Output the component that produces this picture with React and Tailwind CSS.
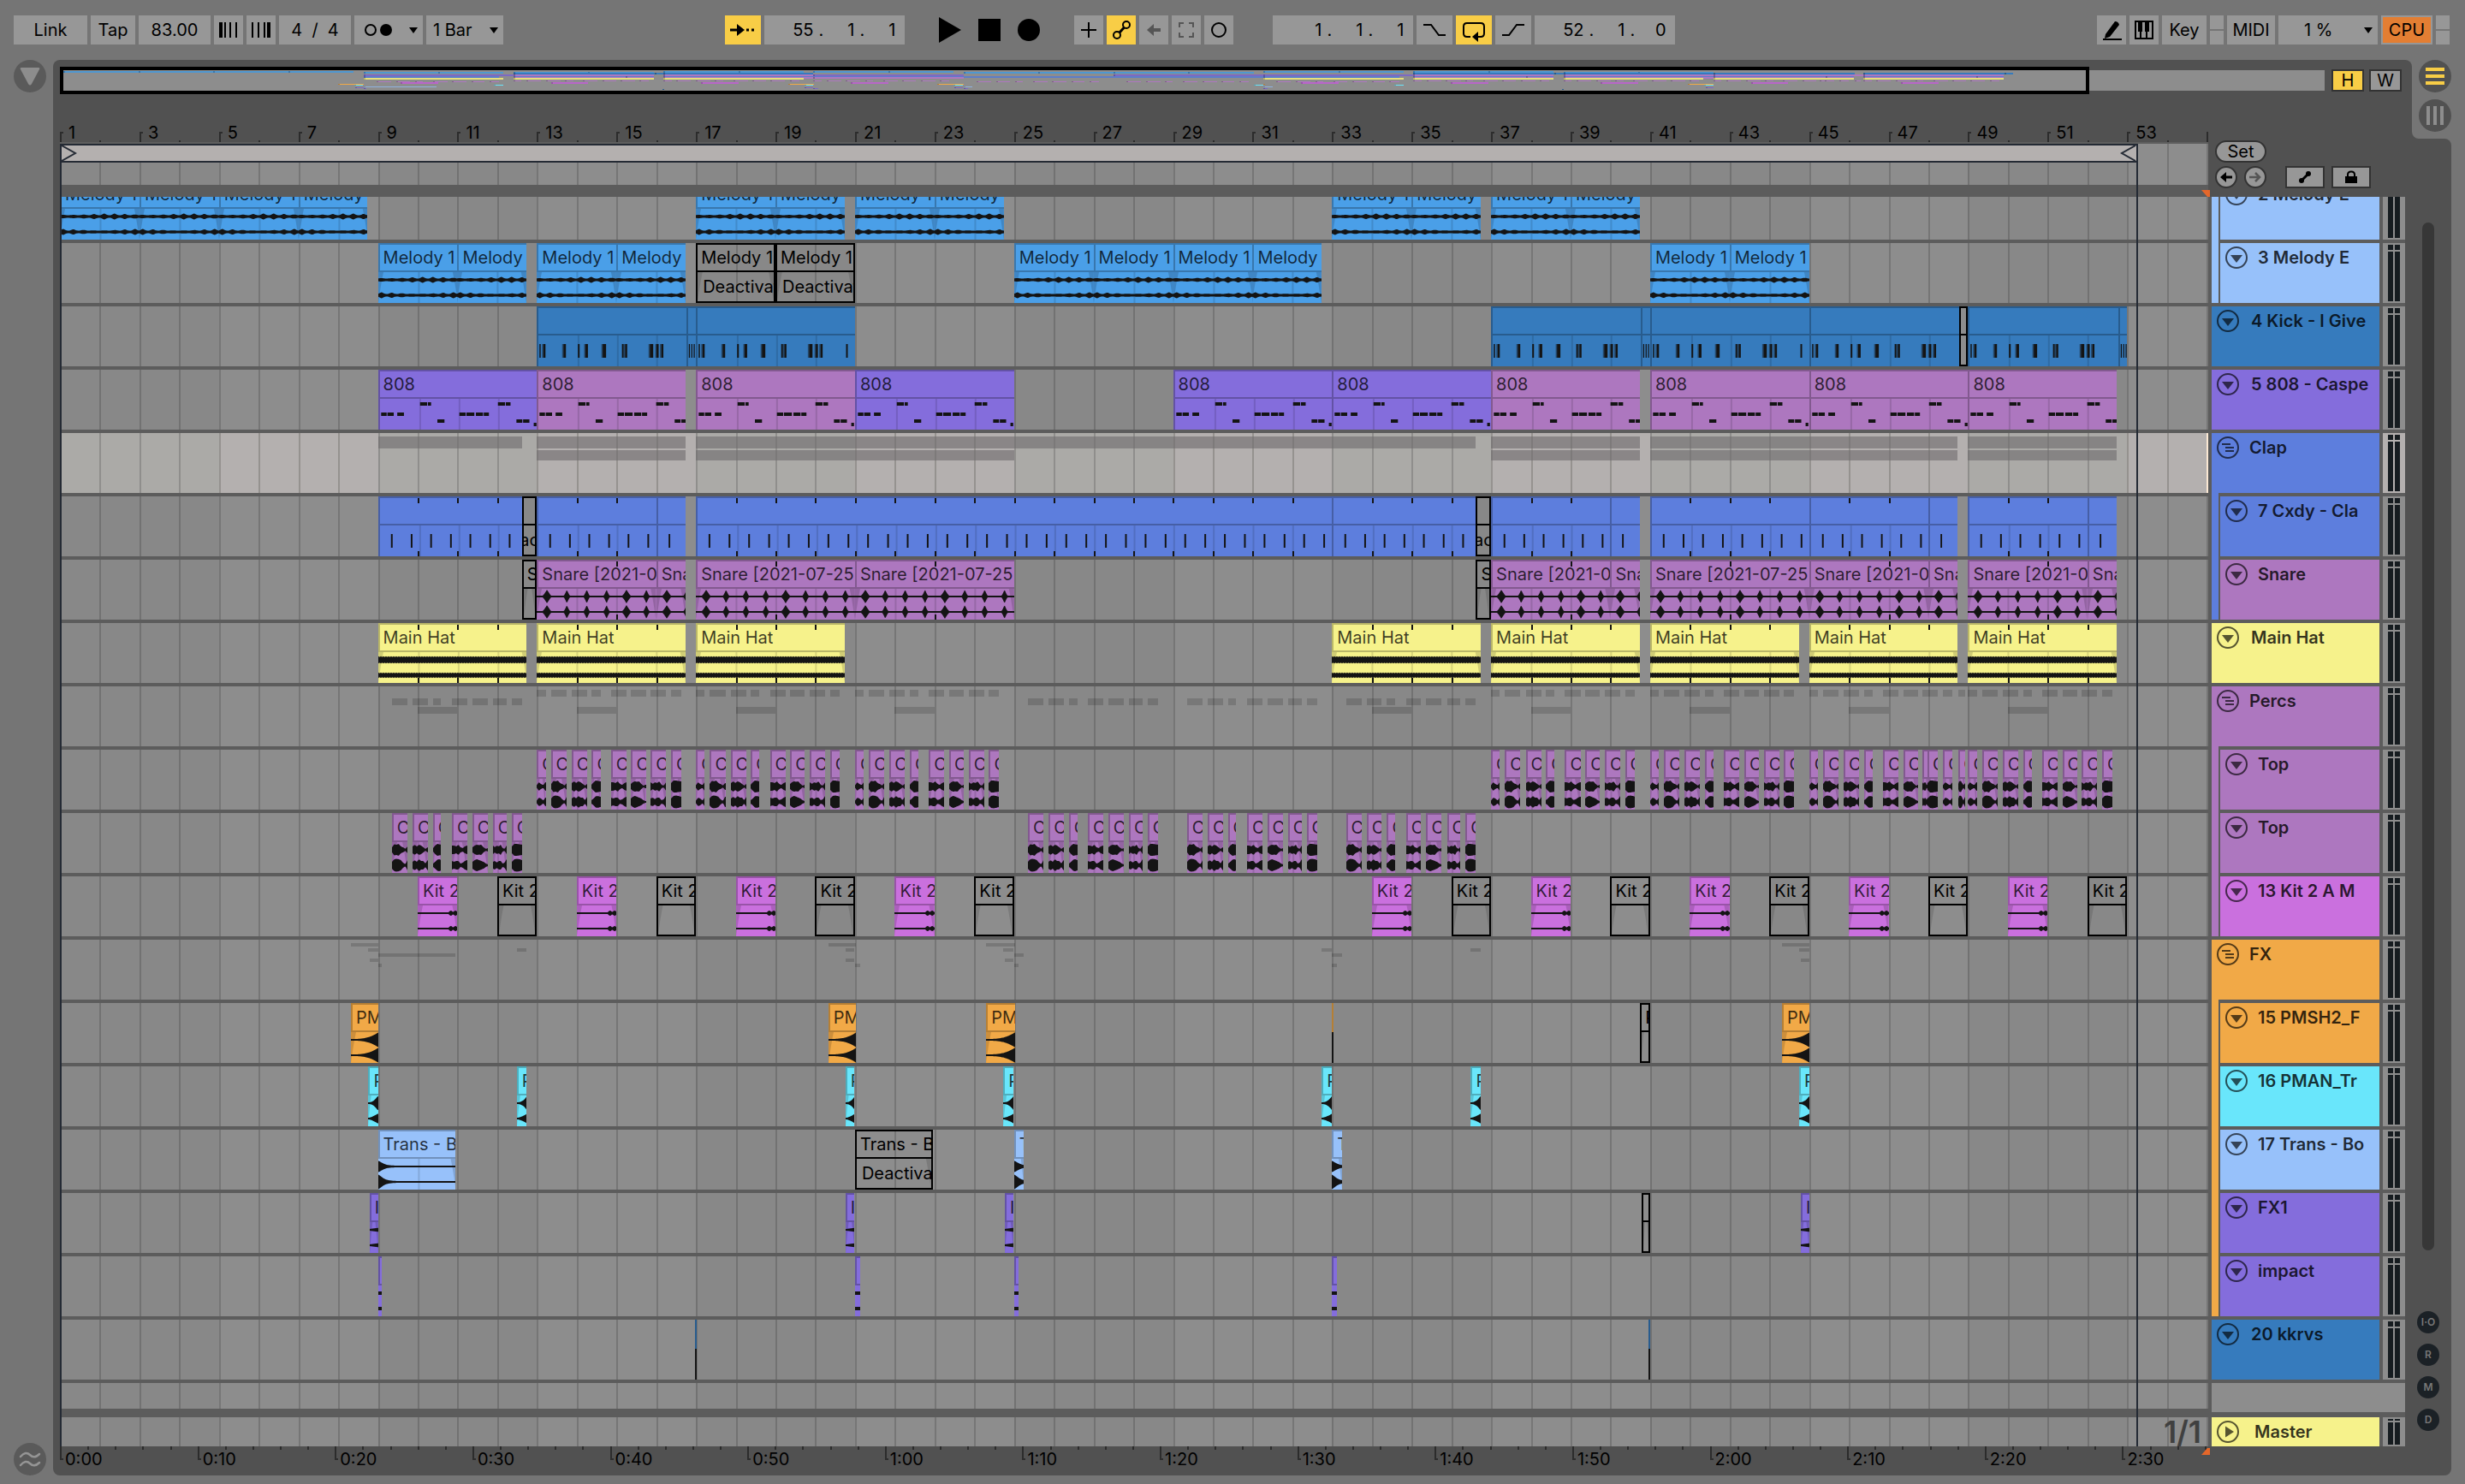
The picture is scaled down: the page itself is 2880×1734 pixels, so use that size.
import React from "react";

const BARS = 54.04;
const BAR_PX = 46.45;
const pct = (bars) => `${(bars / BARS) * 100}%`;

const COLORS = {
  sky: { bg: "bg-[#4a9fe8]", edge: "border-[#3877ae]", dark: "#3877ae", hex: "#4f97d0" },
  kick: { bg: "bg-[#367bbd]", edge: "border-[#285c8e]", dark: "#285c8e", hex: "#367bbd" },
  purple: { bg: "bg-[#846ddc]", edge: "border-[#6352a5]", dark: "#6352a5", hex: "#7c69c4" },
  pink: { bg: "bg-[#ad77bf]", edge: "border-[#82598f]", dark: "#82598f", hex: "#ad77bf" },
  blue: { bg: "bg-[#5d7edd]", edge: "border-[#465fa6]", dark: "#465fa6", hex: "#5d7ec8" },
  yellow: { bg: "bg-[#f6f28b]", edge: "border-[#b9b668]", dark: "#b9b668", hex: "#e6df7c" },
  magenta: { bg: "bg-[#ca70de]", edge: "border-[#9854a7]", dark: "#9854a7", hex: "#b866c9" },
  orange: { bg: "bg-[#f1a947]", edge: "border-[#b57f35]", dark: "#b57f35", hex: "#f1a947" },
  cyan: { bg: "bg-[#69e6fb]", edge: "border-[#4fadbc]", dark: "#4fadbc", hex: "#69e6fb" },
  light: { bg: "bg-[#97c1fa]", edge: "border-[#7191bc]", dark: "#7191bc", hex: "#8fb2df" },
};

const c = (s, e, extra = {}) => ({ s, e, ...extra });
const each = (list, extra) => list.map(([s, e]) => c(s, e, extra));
const off = true;

const MELODY_A = each(
  [[1, 3], [3, 5], [5, 7], [7, 8.74], [17, 19], [19, 20.74], [21, 23], [23, 24.74], [33, 35], [35, 36.74], [37, 39], [39, 40.74]],
  { label: "Melody 1" }
);
const MELODY_B = [
  ...each([[9, 11], [11, 12.74], [13, 15], [15, 16.74]], { label: "Melody 1" }),
  ...each([[17, 19], [19, 21]], { label: "Melody 1", off, note: "Deactivated" }),
  ...each([[25, 27], [27, 29], [29, 31], [31, 32.74], [41, 43], [43, 45]], { label: "Melody 1" }),
];
const KICK = [
  ...each([[13, 16.77], [17, 21], [37, 40.77], [41, 45], [45, 48.77], [49, 52.77]], {}),
  ...each([[16.77, 17], [40.77, 41], [52.77, 53]], { roll: true }),
  c(48.77, 49, { off }),
];
const BASS = [
  ...each([[9, 13], [21, 25], [29, 33], [33, 37]], { label: "808", color: "purple" }),
  ...each([[13, 16.74], [17, 21], [37, 40.74], [41, 45], [45, 49], [49, 52.74]], { label: "808", color: "pink" }),
];
const CLAP = [
  ...each([[9, 12.62], [13, 16], [16, 16.74], [17, 33], [33, 36.62], [37, 40], [40, 40.74], [41, 45], [45, 48], [48, 48.74], [49, 52], [52, 52.74]], { ticks: 1 }),
  ...each([[12.62, 13], [36.62, 37]], { off, note: "ac", center: true }),
];
const SNARE = [
  ...each([[13, 16], [16, 16.74], [17, 21], [21, 25], [37, 40], [40, 40.74], [41, 45], [45, 48], [48, 48.74], [49, 52], [52, 52.74]], { label: "Snare [2021-07-25", ticks: 2 }),
  ...each([[12.62, 13], [36.62, 37]], { off, label: "S" }),
];
const HAT = each(
  [[9, 12.74], [13, 16.74], [17, 20.74], [33, 36.74], [37, 40.74], [41, 44.74], [45, 48.74], [49, 52.74]],
  { label: "Main Hat", ticks: 1 }
);
const PAT_A = [[0, 0.22], [0.35, 0.74], [0.87, 1.26], [1.38, 1.6], [1.86, 2.25], [2.37, 2.74], [2.86, 3.25], [3.37, 3.62]];
const PAT_A2 = [[0, 0.22], [0.35, 0.74], [0.87, 1.26], [1.38, 1.6], [1.86, 2.25], [2.37, 2.74], [2.84, 2.98], [2.98, 3.23], [3.37, 3.61], [3.76, 3.92]];
const PAT_B = [[0.35, 0.74], [0.87, 1.25], [1.38, 1.59], [1.86, 2.24], [2.37, 2.76], [2.89, 3.23], [3.36, 3.62]];
const TOP_A = [13, 17, 21, 37, 41, 45, 49].flatMap((b) =>
  (b === 45 ? PAT_A2 : PAT_A).map(([s, e], i) => c(b + s, b + e, { label: "C", seed: i }))
);
const TOP_B = [9, 25, 29, 33].flatMap((b) => PAT_B.map(([s, e], i) => c(b + s, b + e, { label: "C", seed: i + 1 })));
const KIT = [
  ...[10, 14, 18, 22, 34, 38, 42, 46, 50].map((b) => c(b, b + 1, { label: "Kit 2" })),
  ...[12, 16, 20, 24, 36, 40, 44, 48, 52].map((b) => c(b, b + 1, { label: "Kit 2", off })),
];
const PM = [
  ...each([[8.32, 9], [20.33, 21.02], [24.3, 25.02], [44.32, 45]], { label: "PMSH2" }),
  c(33, 33.04, { sliver: true }),
  c(40.75, 41, { off, label: "P" }),
];
const PMAN = each([[8.76, 9], [12.49, 12.74], [20.76, 20.99], [24.73, 24.99], [32.74, 33], [36.49, 36.74], [44.75, 45]], { label: "P" });
const TRANS = [
  c(9, 10.95, { label: "Trans - Boom" }),
  c(21, 22.95, { label: "Trans - Boom", off, note: "Deactivated" }),
  ...each([[25, 25.25], [33, 33.26]], { label: "T" }),
];
const FX1 = [...each([[8.79, 9], [20.76, 20.99], [24.77, 24.99], [44.79, 45]], { label: "I" }), c(40.78, 41, { off })];
const IMPACT = each([[9, 9.09], [21, 21.12], [25, 25.12], [33, 33.12]], {});
const KKRVS = each([[16.97, 17.01], [40.97, 41.01]], { sliver: true });

const CLAP_SUM = [
  { y: "top-1 h-3.5", list: [[9, 12.62], [13, 16.74], [17, 36.62], [37, 40.74], [41, 48.74], [49, 52.74]] },
  { y: "top-5 h-3", list: [[13, 16.74], [17, 25], [37, 40.74], [41, 48.74], [49, 52.74]] },
];
const ranges = (list) => list.filter((k) => !k.off && !k.sliver).map((k) => [k.s, k.e]);
const PERC_SUM = [
  { y: "top-1 h-2", list: ranges(TOP_A) },
  { y: "top-3.5 h-2", list: ranges(TOP_B) },
  { y: "top-6 h-2", list: ranges(KIT) },
];
const FX_SUM = [
  { y: "top-1 h-1", list: ranges(PM) },
  { y: "top-2.5 h-1", list: ranges(PMAN) },
  { y: "top-4 h-1", list: ranges(TRANS) },
  { y: "top-5.5 h-1", list: ranges(FX1) },
  { y: "top-7 h-1", list: ranges(IMPACT) },
];

const LANES = [
  { id: "m2", kind: "melody", color: "sky", clips: MELODY_A, first: true },
  { id: "m3", kind: "melody", color: "sky", clips: MELODY_B },
  { id: "kick", kind: "kick", color: "kick", clips: KICK },
  { id: "808", kind: "bass", color: "purple", clips: BASS },
  { id: "clap", summary: CLAP_SUM, selected: true },
  { id: "cxdy", kind: "clap", color: "blue", clips: CLAP },
  { id: "snare", kind: "snare", color: "pink", clips: SNARE },
  { id: "hat", kind: "hat", color: "yellow", clips: HAT },
  { id: "percs", summary: PERC_SUM },
  { id: "topA", kind: "top", color: "pink", clips: TOP_A },
  { id: "topB", kind: "top", color: "pink", clips: TOP_B },
  { id: "kit", kind: "kit", color: "magenta", clips: KIT },
  { id: "fx", summary: FX_SUM },
  { id: "pm", kind: "rise", color: "orange", clips: PM },
  { id: "pman", kind: "swell", color: "cyan", clips: PMAN },
  { id: "trans", kind: "decay", color: "light", clips: TRANS },
  { id: "fx1", kind: "thin", color: "purple", clips: FX1 },
  { id: "impact", kind: "dot", color: "purple", clips: IMPACT },
  { id: "kkrvs", kind: "none", color: "kick", clips: KKRVS },
];

function band(w, cy, amp, step = 1) {
  let up = "";
  let down = "";
  for (let x = 0; x <= w + step; x += step) {
    const a = amp(Math.min(x, w));
    up += `${x ? "L" : "M"}${x.toFixed(1)} ${(cy - a).toFixed(2)}`;
    down = `L${x.toFixed(1)} ${(cy + a).toFixed(2)}` + down;
  }
  return up + down + "Z";
}

const TOP_SHAPES = [
  [[1.5, 5, 3, 1.5, 5], [1.5, 5, 4, 1.5, 5]],
  [[3, 6.5, 6, 7, 4, 3, 1, 4], [4, 7, 7.5, 7, 6, 3, 1, 6]],
  [[4, 6, 4, 6, 5, 3, 1, 3], [4, 6, 4, 7, 5, 5, 2, 6]],
  [[2, 5, 7, 6.5, 6], [2, 4, 6.5, 7, 6]],
  [[5, 5, 4, 6, 3, 2, 4, 5], [5, 4, 5, 5, 2, 3, 5, 6]],
  [[3, 5, 6, 5.5, 6, 3, 1, 2], [4, 6, 7, 6, 5, 4, 2, 1]],
  [[5, 3, 5, 4, 6, 2, 1, 5], [4, 5, 3, 5, 5, 2, 3, 7]],
  [[4, 7, 7, 6.5, 6], [4, 7, 7.5, 7, 6]],
];

function amps(kind, w, seed) {
  switch (kind) {
    case "melody": {
      const blob = (x) => Math.pow(Math.abs(Math.sin((x * Math.PI) / 12 + 0.6)), 4);
      return [
        (x) => 1.6 + blob(x) * (1.1 + 0.8 * Math.sin(x / 15 + 4)),
        (x) => 1.6 + blob(x) * (1 + 0.9 * Math.cos(x / 15)),
      ];
    }
    case "snare": {
      const f = (x) => {
        const beat = Math.floor(x / BAR_PX / 0.5);
        const reach = beat % 4 === 0 ? 5 : 3.5;
        const d = Math.abs((((x / BAR_PX) % 0.5) - 0.26) * BAR_PX);
        return d < reach ? 1 + 7 * Math.pow(1 - d / reach, 1.2) : 1;
      };
      return [f, f];
    }
    case "hat":
      return [(x) => 3.4 + (Math.floor(x) % 3 === 0 ? 0.8 : 0), (x) => 2.5 + (Math.floor(x) % 3 === 0 ? 0.8 : 0)];
    case "top": {
      const shape = TOP_SHAPES[seed % 8];
      return shape.map((pts) => (x) => {
        const t = (x / w) * (pts.length - 1);
        const i = Math.min(Math.floor(t), pts.length - 2);
        return pts[i] + (pts[i + 1] - pts[i]) * (t - i);
      });
    }
    case "kit": {
      const f = (x) => (x / w < 0.78 ? 1 : 1 + 2 * Math.abs(Math.sin((x / w - 0.78) * 28)));
      return [f, f];
    }
    case "rise": {
      const f = (x) => 1 + 7.5 * Math.pow(x / w, 3);
      return [f, f];
    }
    case "swell":
      return [(x) => 1 + 7 * Math.pow(x / w, 2.4), (x) => 1 + 4.5 * Math.pow(x / w, 1.6)];
    case "decay":
      return [(x) => 1 + 5.5 * Math.exp(-Math.pow(x / 7, 1.4)), (x) => 1 + 7.5 * Math.exp(-Math.pow(x / 7, 1.3))];
    case "thin":
      return [(x) => 1 + 1.3 * (x / w), (x) => 1 + 1.3 * (x / w)];
    case "dot":
      return [() => 2, () => 2];
    default:
      return null;
  }
}

const KICK_NOTES = [[0.07, 1.5], [0.17, 2.5], [0.68, 3], [1.05, 2], [1.24, 3], [1.68, 4], [2.17, 2], [2.25, 2.5], [2.88, 4], [3.05, 2.5], [3.17, 2.5], [3.82, 2]];
const BASS_NOTES = [
  [0.05, 0.19, 16], [0.21, 0.37, 16], [0.46, 0.63, 16], [1.04, 1.22, 4], [1.24, 1.32, 4], [1.48, 1.66, 24], [2.04, 2.2, 16], [2.22, 2.42, 16],
  [2.46, 2.64, 16], [2.66, 2.79, 16], [3.02, 3.2, 4], [3.22, 3.34, 4], [3.49, 3.64, 24], [3.66, 3.82, 24], [3.93, 4, 28],
];

function ClipBody({ kind, clip, shade }) {
  const len = clip.e - clip.s;
  const w = len * BAR_PX;
  const h = 36;
  const inner = [];
  for (let b = Math.floor(clip.s) + 1; b < clip.e - 0.01; b++) inner.push((b - clip.s) * BAR_PX);
  const fades = ["melody", "snare", "hat", "kit", "top", "rise", "swell", "decay", "thin"].includes(kind);
  const f = Math.min(6, w / 3);
  const a = clip.off ? null : amps(kind, w, clip.seed || 0);
  return (
    <svg className="block h-full w-full" viewBox={`0 0 ${w} ${h}`} preserveAspectRatio="none" aria-hidden="true">
      {!clip.off && inner.map((x) => <rect key={x} x={x} y="0" width="2" height={h} fill={shade} opacity="0.5" />)}
      {fades && (
        <g fill={clip.off ? "#000000" : shade} opacity={clip.off ? 0.12 : 0.6}>
          {kind !== "decay" && <path d={`M0 0H${f}Q${f / 2} 14 0 ${h}Z`} />}
          {kind !== "rise" && kind !== "swell" && <path d={`M${w} 0H${w - f}Q${w - f / 2} 14 ${w} ${h}Z`} />}
        </g>
      )}
      {a && (
        <g fill="#141414">
          <path d={band(w, 9, a[0])} />
          <path d={band(w, 27, a[1])} />
        </g>
      )}
      {kind === "kick" && !clip.off && (
        <g fill="#141414">
          {clip.roll
            ? [1, 4.5, 8].map((x) => <rect key={x} x={x} y="10" width="1.5" height="16" />)
            : KICK_NOTES.filter(([p]) => p < len).map(([p, nw]) => (
                <React.Fragment key={p}>
                  {nw > 2 && <rect x={p * BAR_PX - 3.5} y="10" width="1.5" height="16" opacity="0.5" />}
                  <rect x={p * BAR_PX - 2} y="10" width={nw} height="16" />
                </React.Fragment>
              ))}
        </g>
      )}
      {kind === "bass" &&
        BASS_NOTES.filter(([p]) => p < len).map(([p, q, y]) => (
          <rect key={p} x={p * BAR_PX - 1} y={y} width={(q - p) * BAR_PX} height="4" fill="#141414" />
        ))}
      {kind === "clap" &&
        !clip.off &&
        Array.from({ length: Math.ceil(len) * 2 }, (_, i) => 0.3 + i * 0.505 - Math.floor(i / 2) * 0.01)
          .filter((p) => p < len - 0.04)
          .map((p) => <rect key={p} x={p * BAR_PX - 1} y="10" width="2" height="16" fill="#141414" />)}
    </svg>
  );
}

function Clip({ clip, kind, color }) {
  const tone = COLORS[clip.color || color];
  const box = { left: pct(clip.s - 1), width: pct(clip.e - clip.s) };
  if (clip.sliver) {
    return (
      <div className="absolute inset-y-0 flex flex-col" style={box}>
        <div className="h-[34px]" style={{ background: tone.dark }} />
        <div className="grow bg-[#141414]" />
      </div>
    );
  }
  if (clip.off) {
    return (
      <div className="absolute inset-y-0 flex flex-col overflow-hidden border-2 border-black text-black" style={box}>
        <div className="h-8 shrink-0 border-b-2 border-black pl-1 text-xl leading-[30px] whitespace-nowrap">{clip.label}</div>
        <div className="relative min-h-0 grow overflow-hidden">
          <ClipBody kind={kind} clip={clip} shade={tone.dark} />
          {clip.note && (
            <div className={`absolute inset-0 flex text-xl leading-[34px] whitespace-nowrap ${clip.center ? "justify-center" : "pl-1.5"}`}>
              {clip.note}
            </div>
          )}
        </div>
      </div>
    );
  }
  const ticks = [];
  if (clip.ticks) {
    for (let b = clip.s + clip.ticks; b < clip.e - 0.01; b += clip.ticks) ticks.push((b - clip.s) / (clip.e - clip.s));
  }
  return (
    <div className={`absolute inset-y-0 flex flex-col overflow-hidden ${tone.bg}`} style={box}>
      <div className={`h-[34px] shrink-0 border-y-2 border-l-2 pl-1 text-xl leading-[30px] whitespace-nowrap text-black/75 ${tone.edge}`}>
        {clip.label}
      </div>
      <div className={`min-h-0 grow ${kind === "bass" || kind === "kick" || kind === "clap" ? `border-l-2 ${tone.edge}` : ""}`}>
        <ClipBody kind={kind} clip={clip} shade={tone.dark} />
      </div>
      {ticks.map((t) => (
        <React.Fragment key={t}>
          <div className="absolute top-0.5 h-1.5 w-0.5 bg-[#141414]" style={{ left: `${t * 100}%` }} />
          <div className="absolute bottom-0 h-1.5 w-0.5 bg-[#141414]" style={{ left: `${t * 100}%` }} />
        </React.Fragment>
      ))}
    </div>
  );
}

function Grid({ selected }) {
  return (
    <div className="absolute inset-0 overflow-hidden" aria-hidden="true">
      {Array.from({ length: 55 }, (_, i) => {
        const odd = Math.floor(i / 4) % 2 === 1;
        const tone = selected
          ? odd ? "bg-[#b4b0af] border-[#95928f]" : "bg-[#abaaa7] border-[#8f8e8c]"
          : odd ? "bg-[#8d8d8d] border-[#767676]" : "bg-[#888888] border-[#727272]";
        return <div key={i} className={`absolute inset-y-0 border-l-2 ${tone}`} style={{ left: pct(i), width: pct(1.02) }} />;
      })}
    </div>
  );
}

function Lane({ lane }) {
  return (
    <div className={`relative flex shrink-0 items-end overflow-hidden ${lane.first ? "h-[50px]" : "h-[70px]"}`}>
      {lane.selected && <Grid selected />}
      <div className="relative h-[70px] w-full shrink-0">
        {lane.clips && lane.clips.map((k, i) => <Clip key={i} clip={k} kind={lane.kind} color={lane.color} />)}
        {lane.summary &&
          lane.summary.flatMap((r, i) =>
            r.list.map(([s, e]) => (
              <div
                key={`${i}-${s}`}
                className={`absolute ${r.y} ${lane.selected ? "bg-[#6e6b6c]/60" : "bg-black/15"}`}
                style={{ left: pct(s - 1), width: pct(e - s) }}
              />
            ))
          )}
        {lane.selected && <div className="absolute inset-y-0 right-0 w-0.5 bg-[#fbe7d3]" />}
      </div>
    </div>
  );
}

const Sep = ({ h = "h-1" }) => <div className={`relative shrink-0 bg-[#5c5c5c] ${h}`} />;

function Overview() {
  const total = 60.3;
  const p = (b) => `${(b / total) * 100}%`;
  return (
    <div className="relative h-8 min-w-0 grow" role="img" aria-label="Arrangement overview">
      <div className="absolute inset-x-0 inset-y-1 overflow-hidden bg-[#8d8d8d]" />
      <div className="absolute inset-y-0 left-0 border-4 border-black" style={{ width: "89.6%" }} />
      <div className="absolute inset-y-1 right-0 left-1">
        {LANES.map((lane, row) =>
          (lane.clips || [])
            .filter((k) => !k.off)
            .map((k, i) => (
              <div
                key={`${row}-${i}`}
                className={`absolute ${["topA", "topB", "kkrvs"].includes(lane.id) || row > 12 ? "h-px" : "h-0.5"}`}
                style={{
                  left: p(k.s - 1),
                  width: p(k.e - k.s),
                  top: 1 + Math.round(row * 1.17),
                  background: COLORS[k.color || lane.color].hex,
                }}
              >
                <div className="h-full w-0.5" style={{ background: COLORS[k.color || lane.color].dark }} />
              </div>
            ))
        )}
      </div>
    </div>
  );
}

function Ruler() {
  return (
    <div className="relative h-14 shrink-0 overflow-hidden">
      {Array.from({ length: 55 }, (_, i) =>
        i % 2 === 0 ? (
          <div key={i} className="absolute bottom-0 flex items-end" style={{ left: pct(i) }}>
            <div className="flex h-3">
              <div className="w-0.5 bg-[#2c2c2c]" />
              <div className="h-0.5 w-0.5 bg-[#2c2c2c]" />
            </div>
            {i < 54 && <span className="pl-1.5 text-xl leading-[22px] text-black">{i + 1}</span>}
          </div>
        ) : (
          <div key={i} className="absolute bottom-0 h-0.5 w-0.5 bg-[#2c2c2c]" style={{ left: pct(i) }} />
        )
      )}
    </div>
  );
}

const SEC = 83 / 240;
function TimeRuler() {
  return (
    <div className="relative h-[34px] shrink-0">
      {Array.from({ length: 79 }, (_, i) => {
        const s = i * 2;
        const left = pct(s * SEC);
        if (s % 10) return <div key={i} className="absolute top-0 h-1 w-0.5 bg-[#2c2c2c]" style={{ left }} />;
        return (
          <div key={i} className="absolute top-0 flex" style={{ left }}>
            <div className="h-4 w-1 border-b-2 border-l-2 border-[#2c2c2c]" />
            <span className="pt-px pl-0.5 text-xl leading-7 text-black">{`${Math.floor(s / 60)}:${String(s % 60).padStart(2, "0")}`}</span>
          </div>
        );
      })}
      <svg className="absolute top-0.5 right-[-2px] h-2 w-2.5" viewBox="0 0 10 8">
        <path d="M0 8 7 0h3v8Z" fill="#e4672a" />
      </svg>
    </div>
  );
}

function FoldIcon({ type }) {
  return (
    <svg className="block size-[26px]" viewBox="0 0 26 26" fill="none" stroke="#000" strokeOpacity="0.65" strokeWidth="2">
      <circle cx="13" cy="13" r="12" />
      {type === "group" && <path d="M6 9h10M10 13h10M10 17h10" />}
      {type === "play" && <path d="m10 6.5 10 6.5-10 6.5Z" fill="#000" fillOpacity="0.65" stroke="none" />}
      {!type && <path d="M6 10h14l-7 9Z" fill="#000" fillOpacity="0.65" stroke="none" />}
    </svg>
  );
}

function TrackHeader({ name, tone, type, child, first }) {
  return (
    <div className={`flex shrink-0 items-end overflow-hidden ${tone} ${first ? "h-[50px]" : "h-[70px]"}`}>
      <div className="flex h-[70px] w-full shrink-0 items-start gap-3 overflow-hidden px-1.5 pt-1">
        <button type="button" aria-label={`Fold ${name}`}>
          <FoldIcon type={type} />
        </button>
        <span className={`text-xl leading-[26px] font-semibold whitespace-nowrap text-black/80 ${child || type ? "" : "pl-0.5"}`}>{name}</span>
      </div>
    </div>
  );
}

function Group({ name, tone, children }) {
  return (
    <div className="flex shrink-0 flex-col">
      {name && <TrackHeader name={name} tone={tone} type="group" />}
      <div className="flex gap-0.5">
        <div className={`w-2 shrink-0 ${tone}`} />
        <div className={`flex min-w-0 grow flex-col gap-1 ${name ? "border-t-4 border-[#5c5c5c]" : ""}`}>{children}</div>
      </div>
    </div>
  );
}

function Meter({ size = "h-[70px]", selected, open }) {
  return (
    <div className={`flex shrink-0 justify-center gap-0.5 pb-0.5 ${size} ${selected ? "bg-[#b4b0af]" : "bg-[#8d8d8d]"} ${open ? "" : "pt-0.5"}`}>
      {[0, 1].map((i) => (
        <div key={i} className="flex w-1.5 flex-col gap-0.5">
          {!open && <div className={`bg-[#161c20] ${size === "h-[34px]" ? "h-0.5" : "h-1.5"}`} />}
          <div className="grow bg-[#161c20]" />
        </div>
      ))}
    </div>
  );
}

const cell = "flex h-[34px] shrink-0 items-center justify-center bg-[#979797] text-xl text-black";

function Icon({ children, label, w, active, dim }) {
  return (
    <button type="button" aria-label={label} className={`flex h-[34px] shrink-0 items-center justify-center ${w} ${active ? "bg-[#f8cd46]" : "bg-[#979797]"}`}>
      <svg className="size-[30px]" viewBox="0 0 30 30" fill="none" stroke={dim ? "#555555" : "#000000"} strokeWidth="2">
        {children}
      </svg>
    </button>
  );
}

function Position({ values, label }) {
  return (
    <div role="group" aria-label={label} className="flex h-[34px] w-[164px] shrink-0 items-center justify-end bg-[#979797] pr-2.5 text-xl text-black">
      {values.map((v, i) => (
        <React.Fragment key={i}>
          <input aria-label={`${label} ${["bar", "beat", "sixteenth"][i]}`} defaultValue={v} className="w-7 bg-transparent text-right outline-none" />
          {i < 2 && <span className="w-5 pl-1.5">.</span>}
        </React.Fragment>
      ))}
    </div>
  );
}

const Arrow = () => (
  <svg className="pointer-events-none absolute top-3.5 right-1.5 h-2 w-2.5" viewBox="0 0 10 8">
    <path d="M0 0h10L5 7Z" />
  </svg>
);

function Split() {
  return (
    <div className="flex h-[34px] w-4 shrink-0 flex-col gap-0.5">
      <div className="grow bg-[#979797]" />
      <div className="grow bg-[#979797]" />
    </div>
  );
}

function Toolbar() {
  return (
    <header className="flex h-[70px] shrink-0 items-start pt-[18px] pr-[18px] pl-4">
      <div className="flex gap-1">
        <button type="button" className={`${cell} w-[86px]`}>Link</button>
        <button type="button" className={`${cell} w-[52px]`}>Tap</button>
        <input aria-label="Tempo" defaultValue="83.00" className={`${cell} w-[84px] text-center outline-none`} />
        <Icon label="Nudge down" w="w-[34px]">
          <path d="M6 6v18" strokeWidth="4" />
          <path d="M11 6v18M17 6v18M24 6v18" />
        </Icon>
        <Icon label="Nudge up" w="w-[34px]">
          <path d="M24 6v18" strokeWidth="4" />
          <path d="M5 6v18M12 6v18M19 6v18" />
        </Icon>
        <input aria-label="Time signature" defaultValue="4  /  4" className={`${cell} w-[84px] text-center whitespace-pre outline-none`} />
        <button type="button" aria-label="Metronome" className="relative h-[34px] w-20 bg-[#979797]">
          <svg className="absolute top-2.5 left-3 h-3.5 w-8" viewBox="0 0 32 14">
            <circle cx="7" cy="7" r="6" fill="none" stroke="#000" strokeWidth="2" />
            <circle cx="25" cy="7" r="7" />
          </svg>
          <Arrow />
        </button>
        <div className="relative">
          <select aria-label="Quantization" className="h-[34px] w-[90px] appearance-none bg-[#979797] pl-2 text-xl text-black">
            <option>1 Bar</option>
          </select>
          <Arrow />
        </div>
      </div>
      <div className="flex-[11]" />
      <div className="flex">
        <div className="flex gap-1">
          <Icon label="Follow" w="w-[42px]" active>
            <path d="M0 15h9M19 15h3M25 15h3" strokeWidth="3" />
            <path d="M8 8v14l9-7Z" fill="#000" stroke="none" />
          </Icon>
          <Position label="Arrangement position" values={["55", "1", "1"]} />
        </div>
        <div className="ml-10 flex items-center gap-5">
          <button type="button" aria-label="Play"><svg className="h-[30px] w-[26px]" viewBox="0 0 26 30"><path d="M0 0 26 15 0 30Z" /></svg></button>
          <button type="button" aria-label="Stop" className="size-[26px] bg-black" />
          <button type="button" aria-label="Record" className="size-[26px] rounded-full bg-black" />
        </div>
        <div className="ml-10 flex gap-1">
          <Icon label="Overdub" w="w-[34px]"><path d="M15 6v18M6 15h18" /></Icon>
          <Icon label="Automation arm" w="w-[34px]" active>
            <circle cx="10" cy="21" r="4" />
            <circle cx="21" cy="9" r="4" />
            <path d="m13 18 5.500-6" strokeWidth="3" />
          </Icon>
          <Icon label="Re-enable automation" w="w-[34px]" dim>
            <path d="M14 15h9" strokeWidth="4" />
            <path d="M15 8v14l-8-7Z" fill="#555" stroke="none" />
          </Icon>
          <Icon label="Capture MIDI" w="w-[34px]" dim><path d="M7 12V7h5M18 7h5v5M23 18v5h-5M12 23H7v-5" /></Icon>
          <Icon label="Session record" w="w-[34px]"><circle cx="15" cy="15" r="8" /></Icon>
        </div>
        <div className="ml-[46px] flex gap-1">
          <Position label="Loop start" values={["1", "1", "1"]} />
          <Icon label="Punch in" w="w-[42px]"><path d="M2 9h9l9 12h8" /></Icon>
          <Icon label="Loop" w="w-[42px]" active>
            <path d="M11 23H7q-4 0-4-4v-8q0-4 4-4h16q4 0 4 4v8q0 4-4 4h-3" />
            <path d="M20 17v12l-7-6Z" fill="#000" stroke="none" />
          </Icon>
          <Icon label="Punch out" w="w-[42px]"><path d="M2 21h8l9-12h9" /></Icon>
          <Position label="Loop length" values={["52", "1", "0"]} />
        </div>
      </div>
      <div className="flex-[21]" />
      <div className="flex gap-1">
        <Icon label="Draw mode" w="w-[34px]">
          <path d="M8 20 19 5q4 0 5 4L13 23l-6 2Z" fill="#000" stroke="none" />
          <path d="M5 26h22" />
        </Icon>
        <Icon label="Computer MIDI keyboard" w="w-[34px]">
          <path d="M5 5h20v20H5Z" />
          <path d="M8 4h5v13H8ZM16 4h5v13h-5Z" fill="#000" stroke="none" />
          <path d="M11 16v9M18 16v9" />
        </Icon>
        <button type="button" className={`${cell} w-[52px]`}>Key</button>
        <Split />
        <button type="button" className={`${cell} w-14`}>MIDI</button>
        <div className="relative">
          <select aria-label="CPU load" className="h-[34px] w-[116px] appearance-none bg-[#979797] pl-[30px] text-xl text-black">
            <option>1 %</option>
          </select>
          <Arrow />
        </div>
        <button type="button" className="h-[34px] w-[60px] border-2 border-[#979797] bg-[#e37e33] text-xl text-black">CPU</button>
        <Split />
      </div>
    </header>
  );
}

function Timeline() {
  return (
    <div className="flex min-w-0 grow flex-col">
      <Ruler />
      <div className="h-0.5 bg-[#5e5e5e]" />
      <div className="relative flex flex-col">
        <Grid />
        <div className="relative flex h-[22px] shrink-0">
          <div className="flex items-center justify-between border-y-2 border-[#242a34] bg-[#b4b0af]" style={{ width: pct(52.25) }}>
            <svg className="h-[18px] w-5" viewBox="0 0 20 18" fill="none" stroke="#242a34" strokeWidth="2"><path d="M2 0 18 9 2 18" /></svg>
            <svg className="h-[18px] w-5" viewBox="0 0 20 18" fill="none" stroke="#242a34" strokeWidth="2"><path d="M18 0 2 9l16 9" /></svg>
          </div>
        </div>
        <div className="h-[26px] shrink-0" />
        <div className="relative h-3.5 shrink-0 bg-[#5c5c5c]">
          <svg className="absolute right-[-2px] bottom-0 h-2 w-2.5" viewBox="0 0 10 8">
            <path d="M0 0h10v8H7Z" fill="#e4672a" />
          </svg>
        </div>
        {LANES.map((lane) => (
          <React.Fragment key={lane.id}>
            <Lane lane={lane} />
            <Sep />
          </React.Fragment>
        ))}
        <div className="h-[30px] shrink-0" />
        <Sep h="h-2.5" />
        <div className="relative flex h-[34px] shrink-0 items-center justify-end pr-2 text-4xl leading-[34px] font-semibold text-[#404040]">1/1</div>
        <div className="absolute inset-y-0 left-0 w-0.5 bg-[#242a34]" />
        <div className="absolute inset-y-0 w-0.5 bg-[#242a34]" style={{ left: pct(52.23) }} />
      </div>
      <TimeRuler />
    </div>
  );
}

function TrackColumn() {
  const pill = "flex h-[26px] items-center justify-center rounded-full border-2 border-[#333333] bg-[#979797] text-black";
  const square = "flex h-[26px] w-[46px] items-center justify-center border-2 border-[#333333] bg-[#979797]";
  return (
    <div className="w-[238px] shrink-0 pr-2">
      <div className="flex h-[120px] flex-col justify-end gap-1 pb-2.5 pl-2">
        <button type="button" className={`${pill} w-[60px] text-xl leading-5`}>Set</button>
        <div className="flex gap-2">
          <button type="button" aria-label="Previous locator" className={`${pill} w-[26px]`}>
            <svg className="size-4 shrink-0" viewBox="0 0 16 16"><path d="M8 2v12L1 8ZM7 6.500h8v3H7Z" /></svg>
          </button>
          <button type="button" aria-label="Next locator" className={`${pill} w-[26px]`}>
            <svg className="size-4 shrink-0" viewBox="0 0 16 16" fill="none" stroke="#555" strokeWidth="2.500"><path d="M1 8h12M8 3l5 5-5 5" /></svg>
          </button>
          <button type="button" aria-label="Automation mode" className={`${square} ml-3.5`}>
            <svg className="size-4" viewBox="0 0 16 16"><circle cx="4" cy="12" r="3" /><circle cx="12" cy="4" r="3" /><path d="M4 12 12 4" stroke="#000" strokeWidth="3" /></svg>
          </button>
          <button type="button" aria-label="Lock envelopes" className={square}>
            <svg className="size-4" viewBox="0 0 16 16"><path d="M1 7h14v8H1Z" /><path d="M4 8V5q0-3.500 4-3.500T12 5v3" fill="none" stroke="#000" strokeWidth="2" /></svg>
          </button>
        </div>
      </div>
      <div className="flex gap-1 bg-[#5c5c5c] pl-1">
        <div className="flex min-w-0 grow flex-col gap-1">
          <Group tone="bg-[#97c1fa]">
            <TrackHeader child first name="2 Melody E" tone="bg-[#97c1fa]" />
            <TrackHeader child name="3 Melody E" tone="bg-[#97c1fa]" />
          </Group>
          <TrackHeader name="4 Kick - I Give" tone="bg-[#367bbd]" />
          <TrackHeader name="5 808 - Caspe" tone="bg-[#846ddc]" />
          <Group name="Clap" tone="bg-[#5d7edd]">
            <TrackHeader child name="7 Cxdy - Cla" tone="bg-[#5d7edd]" />
            <TrackHeader child name="Snare" tone="bg-[#ad77bf]" />
          </Group>
          <TrackHeader name="Main Hat" tone="bg-[#f6f28b]" />
          <Group name="Percs" tone="bg-[#ad77bf]">
            <TrackHeader child name="Top" tone="bg-[#ad77bf]" />
            <TrackHeader child name="Top" tone="bg-[#ad77bf]" />
            <TrackHeader child name="13 Kit 2 A M" tone="bg-[#ca70de]" />
          </Group>
          <Group name="FX" tone="bg-[#f1a947]">
            <TrackHeader child name="15 PMSH2_F" tone="bg-[#f1a947]" />
            <TrackHeader child name="16 PMAN_Tr" tone="bg-[#69e6fb]" />
            <TrackHeader child name="17 Trans - Bo" tone="bg-[#97c1fa]" />
            <TrackHeader child name="FX1" tone="bg-[#846ddc]" />
            <TrackHeader child name="impact" tone="bg-[#846ddc]" />
          </Group>
          <TrackHeader name="20 kkrvs" tone="bg-[#367bbd]" />
        </div>
        <div className="flex w-[26px] shrink-0 flex-col gap-1">
          {LANES.map((l) => (
            <Meter key={l.id} size={l.first ? "h-[50px]" : "h-[70px]"} open={l.first} selected={l.selected} />
          ))}
        </div>
      </div>
      <div className="flex flex-col gap-1.5 bg-[#5c5c5c] pt-1 pl-1">
        <div className="h-[34px] bg-[#8d8d8d]" />
        <div className="flex gap-1">
          <div className="flex h-[34px] min-w-0 grow items-center gap-[18px] bg-[#f6f28b] px-1.5">
            <button type="button" aria-label="Unfold Master"><FoldIcon type="play" /></button>
            <span className="text-xl font-semibold text-black/80">Master</span>
          </div>
          <div className="w-[26px] shrink-0"><Meter size="h-[34px]" /></div>
        </div>
      </div>
    </div>
  );
}

export default function App() {
  const round = "flex size-[38px] shrink-0 items-center justify-center rounded-full";
  return (
    <div className="flex min-h-screen flex-col bg-[#757575] font-['Inter','Noto_Sans',sans-serif]">
      <Toolbar />
      <main className="flex pr-4 pb-2.5">
        <div className="flex w-[62px] shrink-0 flex-col justify-between pl-4">
          <button type="button" aria-label="Show browser" className={`${round} bg-[#5a5a5a]`}>
            <svg className="size-[26px]" viewBox="0 0 26 26"><path d="M3 3h20q2 0 1 2L15 22q-2 3-4 0L2 5Q1 3 3 3Z" fill="#8d8d8d" /></svg>
          </button>
          <button type="button" aria-label="Groove pool" className={`${round} bg-[#5a5a5a]`}>
            <svg className="h-[26px] w-[26px]" viewBox="0 0 26 26" fill="none" stroke="#959595" strokeWidth="2.500" strokeLinecap="round">
              <path d="M2 10Q8 3 13 8t11-1M2 20q6-7 11-2t11-1" />
            </svg>
          </button>
        </div>
        <section className="flex min-w-0 grow flex-col rounded-l-lg rounded-tr-lg bg-[#515151] pt-2 pl-2">
          <div className="flex items-center pr-3">
            <Overview />
            <button type="button" className="ml-2 h-[26px] w-[38px] border-2 border-[#333333] bg-[#f8cd46] text-xl leading-5 text-black">H</button>
            <button type="button" className="ml-1.5 h-[26px] w-[38px] border-2 border-[#333333] bg-[#979797] text-xl leading-5 text-black">W</button>
          </div>
          <div className="flex">
            <Timeline />
            <TrackColumn />
          </div>
        </section>
        <aside className="flex w-[46px] shrink-0 flex-col">
          <div className="h-[92px] shrink-0 bg-[#515151]">
            <div className="flex h-full flex-col items-end gap-2 rounded-bl-lg bg-[#757575]">
              <button type="button" aria-label="Arrangement view" className={`${round} bg-[#515151]`}>
                <svg className="size-[22px]" viewBox="0 0 22 22" fill="#f8cd46"><path d="M0 1h22v4H0ZM0 9h22v4H0ZM0 17h22v4H0Z" /></svg>
              </button>
              <button type="button" aria-label="Session view" className={`${round} bg-[#515151]`}>
                <svg className="size-[22px]" viewBox="0 0 22 22" fill="#8d8d8d"><path d="M1 0h4v22H1ZM9 0h4v22H9ZM17 0h4v22h-4Z" /></svg>
              </button>
            </div>
          </div>
          <div className="flex grow flex-col items-center rounded-tr-lg rounded-br-lg bg-[#515151] pt-[98px] pr-2 pb-[52px]">
            <div className="mb-[71px] w-3.5 grow rounded-full bg-[#373737]" />
            <div className="flex flex-col gap-3">
              {["I·O", "R", "M", "D"].map((t) => (
                <button key={t} type="button" className="flex size-[26px] items-center justify-center rounded-full bg-[#1b2126] text-xs font-semibold text-[#777777]">
                  {t}
                </button>
              ))}
            </div>
          </div>
        </aside>
      </main>
    </div>
  );
}
